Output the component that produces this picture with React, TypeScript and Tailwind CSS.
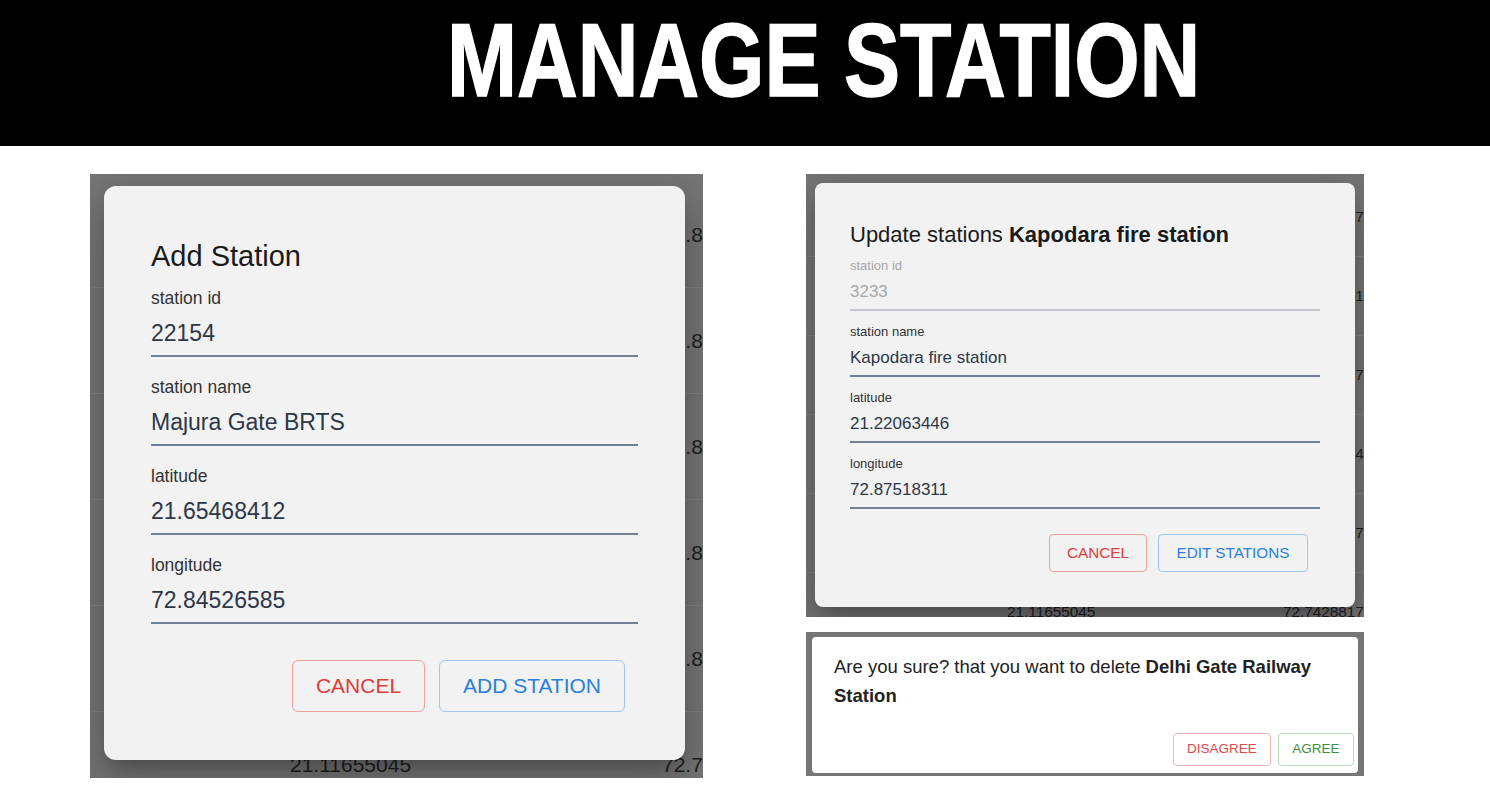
const leftRows = [
  { lat: '21.20478311', lng: '72.84126573' },
  { lat: '21.19514522', lng: '72.83069105' },
  { lat: '21.18276415', lng: '72.82257720' },
  { lat: '21.17602288', lng: '72.81793461' },
  { lat: '21.16249730', lng: '72.80512288' },
  { lat: '21.11655045', lng: '72.74288170' },
];

const rightRows = [
  { lat: '21.22063446', lng: '72.8751837' },
  { lat: '21.21490735', lng: '72.8640261' },
  { lat: '21.20871249', lng: '72.8573317' },
  { lat: '21.20137520', lng: '72.8491654' },
  { lat: '21.19522618', lng: '72.8344797' },
  { lat: '21.11655045', lng: '72.7428817' },
];

function Field({ label, value, disabled = false }: { label: string; value: string; disabled?: boolean }) {
  return (
    <div className="flex flex-col">
      <span className={`text-[17.5px] leading-[22px] ${disabled ? 'text-[#a0a0a0]' : 'text-[#333]'}`}>{label}</span>
      <div className="mt-[10px] border-b-2 border-[#718096] pb-[8px] text-[23px] leading-[28px] text-[#2d3748]">{value}</div>
    </div>
  );
}

function SmallField({ label, value, disabled = false }: { label: string; value: string; disabled?: boolean }) {
  return (
    <div className="flex flex-col">
      <span className={`text-[13px] leading-[16px] ${disabled ? 'text-[#a8a8a8]' : 'text-[#333]'}`}>{label}</span>
      <div
        className={`mt-[8px] border-b-2 pb-[7px] text-[17px] leading-[20px] ${
          disabled ? 'border-[#c5c8cc] text-[#a8a8a8]' : 'border-[#718096] text-[#2d3748]'
        }`}
      >
        {value}
      </div>
    </div>
  );
}

const dialogShadow =
  'shadow-[0_11px_15px_-7px_rgba(0,0,0,0.2),0_24px_38px_3px_rgba(0,0,0,0.14),0_9px_46px_8px_rgba(0,0,0,0.12)]';

export default function App() {
  return (
    <div className="w-[1490px] h-[797px] bg-white overflow-hidden font-['Liberation_Sans',Arial,sans-serif]">
      {/* Header */}
      <header className="h-[146px] bg-black flex items-start pl-[447px] pt-[9px]">
        <h1 className="origin-left scale-x-[0.816] font-['Liberation_Sans',Arial,sans-serif] font-bold text-[103px] leading-none text-white whitespace-nowrap [-webkit-text-stroke:1.5px_white]">
          MANAGE STATION
        </h1>
      </header>

      <main className="flex items-start pl-[90px] pt-[28px] gap-[103px]">
        {/* Add station */}
        <section className="grid w-[613px] h-[604px] overflow-hidden bg-[#767676]">
          <div className="[grid-area:1/1] pt-[8px] text-[21px] text-[#1f1f1f]">
            {leftRows.map((r, i) => (
              <div key={i} className="flex items-center h-[106px] border-b border-[#838383] pl-[200px] whitespace-nowrap">
                <span className="w-[372px] shrink-0">{r.lat}</span>
                <span>{r.lng}</span>
              </div>
            ))}
          </div>
          <div
            className={`[grid-area:1/1] self-start justify-self-start ml-[14px] mt-[12px] w-[581px] h-[574px] rounded-[12px] bg-[#f2f2f2] px-[47px] pt-[53px] ${dialogShadow}`}
          >
            <h2 className="text-[29px] leading-[34px] text-[#1a1a1a]">Add Station</h2>
            <div className="mt-[14px] flex flex-col gap-[19px]">
              <Field label="station id" value="22154" />
              <Field label="station name" value="Majura Gate BRTS" />
              <Field label="latitude" value="21.65468412" />
              <Field label="longitude" value="72.84526585" />
            </div>
            <div className="mt-[36px] flex justify-end gap-[14px] pr-[13px]">
              <button className="w-[133px] h-[52px] rounded-[6px] border border-[#eea3a3] text-[21px] text-[#e03c3c]">
                CANCEL
              </button>
              <button className="w-[186px] h-[52px] rounded-[6px] border border-[#9fc6ef] text-[21px] text-[#2a7fde]">
                ADD STATION
              </button>
            </div>
          </div>
        </section>

        <div className="flex flex-col gap-[15px]">
          {/* Update station */}
          <section className="grid w-[558px] h-[443px] overflow-hidden bg-[#767676]">
            <div className="[grid-area:1/1] pt-[4px] text-[15.3px] text-[#1f1f1f]">
              {rightRows.map((r, i) => (
                <div key={i} className="flex items-center h-[79px] border-b border-[#838383] pl-[201px] whitespace-nowrap">
                  <span className="w-[276px] shrink-0">{r.lat}</span>
                  <span>{r.lng}</span>
                </div>
              ))}
            </div>
            <div
              className={`[grid-area:1/1] self-start justify-self-start ml-[9px] mt-[9px] w-[540px] h-[424px] rounded-[8px] bg-[#f2f2f2] px-[35px] pt-[39px] ${dialogShadow}`}
            >
              <h2 className="text-[22px] leading-[26px] text-[#1a1a1a] whitespace-nowrap">
                Update stations <span className="font-bold">Kapodara fire station</span>
              </h2>
              <div className="mt-[10px] flex flex-col gap-[13px]">
                <SmallField label="station id" value="3233" disabled />
                <SmallField label="station name" value="Kapodara fire station" />
                <SmallField label="latitude" value="21.22063446" />
                <SmallField label="longitude" value="72.87518311" />
              </div>
              <div className="mt-[25px] flex justify-end gap-[11px] pr-[12px]">
                <button className="w-[98px] h-[38px] rounded-[4px] border border-[#eea3a3] text-[15.3px] text-[#e03c3c]">
                  CANCEL
                </button>
                <button className="w-[150px] h-[38px] rounded-[4px] border border-[#9fc6ef] text-[15.3px] text-[#2a7fde]">
                  EDIT STATIONS
                </button>
              </div>
            </div>
          </section>

          {/* Delete confirm */}
          <section className="w-[558px] h-[144px] bg-[#767676] pl-[6px] pr-[6px] pt-[5px] pb-[3px]">
            <div className="h-full rounded-[4px] bg-white pl-[22px] pr-[4px] pt-[15px] pb-[7px] flex flex-col">
              <p className="pr-[18px] text-[18.5px] leading-[29px] text-[#222]">
                Are you sure? that you want to delete <span className="font-bold">Delhi Gate Railway Station</span>
              </p>
              <div className="mt-auto flex justify-end gap-[7px]">
                <button className="w-[98px] h-[33px] rounded-[4px] border border-[#f2b3b3] text-[13.5px] text-[#e04848]">
                  DISAGREE
                </button>
                <button className="w-[76px] h-[33px] rounded-[4px] border border-[#b7d9b8] text-[13.5px] text-[#3b8f3e]">
                  AGREE
                </button>
              </div>
            </div>
          </section>
        </div>
      </main>
    </div>
  );
}
